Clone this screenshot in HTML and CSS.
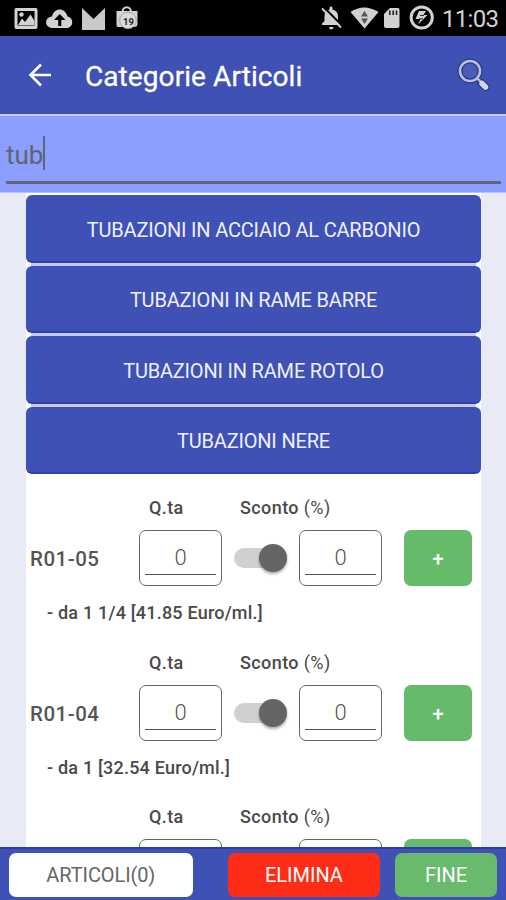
FILE: index.html
```html
<!DOCTYPE html>
<html lang="it">
<head>
<meta charset="utf-8">
<title>Categorie Articoli</title>
<link rel="stylesheet" href="styles.css">
</head>
<body>
<div class="screen">
  <div class="status">
    <svg class="status-icons" width="150" height="36" viewBox="0 0 150 36">
      <path fill="#d2d2d2" fill-rule="evenodd" d="M16 8H36Q37.500 8 37.500 10V27Q37.500 29 35.500 29H16Q14.500 29 14.500 27V10Q14.500 8 16 8ZM17.500 11V25.500H34.500V11Z"/>
      <path fill="#d2d2d2" d="M18 25L22 18.500L25 22L30.500 14.500L34.500 21V25Z"/><circle cx="21.500" cy="14.500" r="2.200" fill="#d2d2d2"/>
      <path fill="#d2d2d2" d="M53 28C44 28 44 17 52 16.500C54 7.500 65 7 67.500 16.500C74 17.500 74 28 66.500 28Z"/>
      <path fill="#000" d="M59.700 14L65.500 20H61.300V26H58.200V20H54Z"/>
      <path fill="#c9c9c9" d="M82 8L93.500 19L105 8V30H82Z"/>
      <path fill="none" stroke="#d2d2d2" stroke-width="2" d="M122.500 12C122.500 5.500 131 5.500 131 12"/>
      <path fill="#d2d2d2" d="M116.500 11H137.500V24Q137.500 27 134 27H118Q116.500 27 116.500 25Z"/>
      <circle cx="128" cy="20.500" r="8.300" fill="#dadada" stroke="#999" stroke-width=".8"/>
      <text x="128.500" y="24.500" class="badge">19</text>
    </svg>
    <svg class="status-icons" width="122" height="36" viewBox="320 0 122 36">
      <path fill="#d2d2d2" d="M322 25V23.500L324.500 21V16Q324.500 11 329.500 9.500V7.500Q331 5.500 332.500 7.500V9.500Q338 11 338 16V21L340.500 24V25ZM329 27H333.500Q333 29.500 331.200 29.500Q329.400 29.500 329 27Z"/>
      <path stroke="#000" stroke-width="2.200" d="M323.500 7L342 25.500"/><path stroke="#d2d2d2" stroke-width="1.800" d="M322 8.500L341 27.500"/>
      <path fill="#d2d2d2" d="M350.500 12Q364 3 378.500 12L364.500 28.500Z"/>
      <path fill="#555" d="M364.500 11L368 16.500H361ZM361 18.500H368L364.500 24Z"/>
      <path fill="#d2d2d2" d="M390 8H398Q399.500 8 399.500 10V26Q399.500 28 397.500 28H386Q384 28 384 26V14Z"/>
      <path stroke="#222" stroke-width="1.600" d="M389.800 10.500V15M393.200 10.500V15M396.500 10.500V15"/>
      <circle cx="421.700" cy="17.500" r="10.600" fill="none" stroke="#d2d2d2" stroke-width="3"/>
      <path fill="#d2d2d2" d="M419 11H426L423.500 15H427.500L418 24.500L420.500 19H415.500Z"/>
      <path fill="none" stroke="#000" stroke-width=".8" d="M420 15.500H424M419 18.800H423"/>
    </svg>
    <span class="clock">11:03</span>
  </div>
  <header class="bar">
    <svg class="back" width="24" height="24" viewBox="0 0 24 24"><path fill="none" stroke="#fff" stroke-width="2.600" d="M23 12H3M13 1.500L2.500 12L13 22.500"/></svg>
    <h1 class="title">Categorie Articoli</h1>
    <svg class="search-icon" width="34" height="34" viewBox="0 0 34 34">
      <path stroke="#2b3880" stroke-width="8" stroke-linecap="round" d="M25.500 25L29.500 29"/>
      <circle cx="14" cy="13" r="10" fill="#4c5cb4" stroke="#2b3880" stroke-width="5"/>
      <circle cx="14" cy="13" r="10" fill="none" stroke="#b8bfdf" stroke-width="2.600"/>
      <path stroke="#b8bfdf" stroke-width="2.400" d="M21 20L25 24"/>
      <path stroke="#d0d4ec" stroke-width="5.500" stroke-linecap="round" d="M26 25.500L29.500 29"/>
    </svg>
  </header>
  <div class="search"><div class="field"><span class="query">tub</span><span class="caret"></span></div></div>
  <main class="list">
    <div class="cats">
      <div class="cat">TUBAZIONI IN ACCIAIO AL CARBONIO</div>
      <div class="cat">TUBAZIONI IN RAME BARRE</div>
      <div class="cat">TUBAZIONI IN RAME ROTOLO</div>
      <div class="cat">TUBAZIONI NERE</div>
    </div>
    <section class="item">
      <div class="labels"><span>Q.ta</span><span>Sconto <span class="thin">(%)</span></span></div>
      <div class="row"><span class="code">R01-05</span><div class="box"><span>0</span></div><div class="toggle"><i class="knob"></i></div><div class="box"><span>0</span></div><div class="add">+</div></div>
      <p class="desc">- da 1 1/4 [41.85 Euro/ml.]</p>
    </section>
    <section class="item">
      <div class="labels"><span>Q.ta</span><span>Sconto <span class="thin">(%)</span></span></div>
      <div class="row"><span class="code">R01-04</span><div class="box"><span>0</span></div><div class="toggle"><i class="knob"></i></div><div class="box"><span>0</span></div><div class="add">+</div></div>
      <p class="desc">- da 1 [32.54 Euro/ml.]</p>
    </section>
    <section class="item">
      <div class="labels"><span>Q.ta</span><span>Sconto <span class="thin">(%)</span></span></div>
      <div class="row"><span class="code"></span><div class="box"></div><div class="toggle"></div><div class="box"></div><div class="add"></div></div>
    </section>
  </main>
  <footer class="foot"><div class="btn articles">ARTICOLI(0)</div><div class="btn remove">ELIMINA</div><div class="btn done">FINE</div></footer>
</div>
</body>
</html>
```

FILE: styles.css
```css
* { box-sizing: border-box; }
body { margin: 0; font-family: Roboto, "Liberation Sans", sans-serif; }
.screen { width: 506px; height: 900px; overflow: hidden; display: flex; flex-direction: column; background: #e8eaf6; }
.status { height: 36px; flex: none; background: #000; display: flex; align-items: center; }
.status-icons { flex: none; }
.status-icons + .status-icons { margin-left: 170px; }
.badge { font: 700 9.500px Roboto, sans-serif; text-anchor: middle; fill: #222; }
.clock { color: #d2d2d2; font-size: 24px; line-height: 36px; padding-top: 1px; letter-spacing: -.7px; white-space: nowrap; }
.bar { height: 78px; flex: none; background: #3f51b5; display: flex; align-items: center; padding-left: 28px; }
.back { flex: none; }
.title { margin: 3px 0 0 33px; color: #fff; font-size: 28px; line-height: 34px; font-weight: 400; letter-spacing: .08px; width: 371px; white-space: nowrap; -webkit-text-stroke: .3px #fff; }
.search-icon { flex: none; margin-top: -1px; }
.search { height: 79px; flex: none; background: #8c9eff; border-top: 2px solid #c5cdfa; border-bottom: 1px solid #b7c3ff; padding: 18px 5px 0 6px; }
.field { height: 50px; border-bottom: 3px solid #636573; display: flex; align-items: flex-start; }
.query { color: #62646f; font-size: 26px; line-height: 42px; }
.caret { width: 2px; height: 34px; margin-top: 2px; background: #62646f; }
.list { flex: 1; min-height: 0; overflow: hidden; margin: 0 25px 0 26px; padding-top: 2px; background: #fff; }
.cats { display: grid; gap: 3px; background: linear-gradient(#c5cae9, #c5cae9) center / calc(100% - 10px) calc(100% - 12px) no-repeat; }
.cat { height: 67.500px; border-radius: 6px; background: #3f51b5; color: #eef0ff; display: flex; align-items: center; justify-content: center; font-size: 20px; letter-spacing: -.19px; border-bottom: 2px solid #2f40aa; padding-top: 4px; white-space: nowrap; }
.item { height: 154.700px; padding-top: 23px; }
.labels { height: 33px; display: grid; grid-template-columns: 91px 1fr; padding-left: 123px; font-size: 18px; line-height: 22px; font-weight: 500; color: #4a4a4a; letter-spacing: .4px; }
.thin { font-weight: 400; }
.row { height: 56px; display: flex; align-items: center; }
.code { width: 113px; padding: 2px 0 0 4px; font-size: 20.500px; font-weight: 500; color: #555; letter-spacing: .5px; }
.box { width: 83px; height: 56px; border: 1.500px solid #666; border-radius: 7px; padding: 0 5px; color: #555; font-size: 22px; font-weight: 300; text-align: center; }
.box span { display: block; height: 44px; line-height: 53px; border-bottom: 1px solid #555; }
.toggle { width: 77px; height: 56px; display: flex; align-items: center; padding-left: 12px; }
.toggle:not(:empty)::before { content: ""; width: 48px; height: 20px; border-radius: 10px; background: #d0d0d0; }
.knob { width: 28px; height: 28px; margin-left: -23px; border-radius: 50%; background: #646464; box-shadow: 0 2px 3px #0005; position: relative; }
.add { width: 68px; height: 56px; margin-left: 22px; border-radius: 7px; background: #66bb6a; color: #fff; display: flex; align-items: center; justify-content: center; font-size: 20px; font-weight: 500; padding-top: 2px; }
.desc { margin: 16px 0 0 21px; font-size: 18px; line-height: 22px; font-weight: 500; color: #4a4a4a; letter-spacing: .2px; white-space: nowrap; }
.foot { height: 53px; flex: none; background: #3f51b5; border-top: 2px solid #2c3da8; display: flex; align-items: center; padding: 0 9px; }
.btn { height: 44px; border-radius: 7px; display: flex; align-items: center; justify-content: center; color: #fff; font-size: 20px; }
.articles { width: 184px; background: #fff; color: #666; letter-spacing: -.1px; }
.remove { width: 153px; margin-left: 35px; background: #ff2d18; }
.done { width: 102px; margin-left: 15px; background: #6aba6e; }
```
